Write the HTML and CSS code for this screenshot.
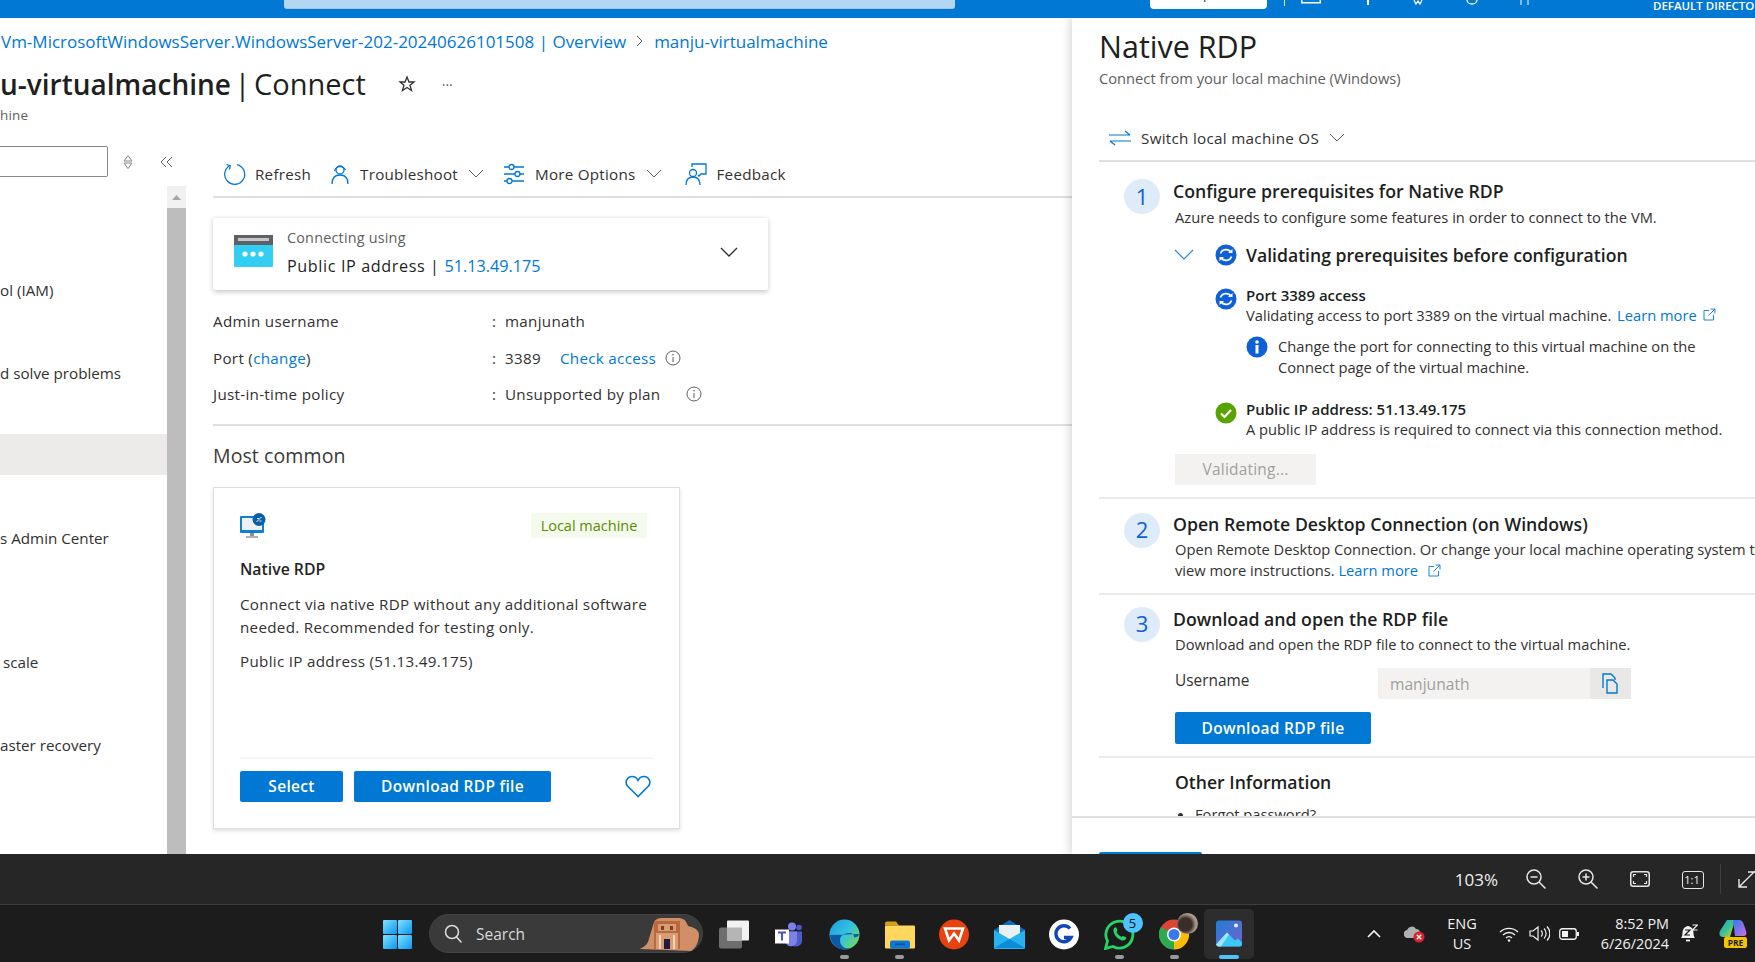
FILE: index.html
```html
<!DOCTYPE html>
<html lang="en">
<head>
<meta charset="utf-8">
<title>Connect</title>
<link rel="stylesheet" href="styles.css">
</head>
<body>
<div class="page">
  <header class="topbar">
    <div class="top-search"><span>Search resources, services, and docs (G+/)</span></div>
    <div class="top-copilot"><span>Copilot</span></div>
    <div class="top-sep"></div>
    <div class="top-ticks">
      <svg width="22" height="6" viewBox="0 0 22 6"><rect x="0" y="2" width="20" height="1.5" fill="#fff"/><rect x="0" y="0" width="1.5" height="3" fill="#fff"/><rect x="18.500" y="0" width="1.5" height="3" fill="#fff"/></svg>
      <svg width="8" height="6" viewBox="0 0 8 6"><path d="M4 0v5" stroke="#fff" stroke-width="2"/></svg>
      <svg width="12" height="6" viewBox="0 0 12 6"><path d="M1 0l2 4 2-3 2 3 2-4" stroke="#fff" stroke-width="1.200" fill="none"/></svg>
      <svg width="12" height="6" viewBox="0 0 12 6"><path d="M1 0a5 4 0 0 0 10 0" stroke="#fff" stroke-width="1.300" fill="none"/></svg>
      <svg width="12" height="6" viewBox="0 0 12 6"><path d="M2 5V0M9 5V0" stroke="#fff" stroke-width="1"/></svg>
    </div>
    <div class="top-dir">DEFAULT DIRECTORY</div>
  </header>

  <div class="workspace">
    <main class="blade">
      <div class="crumbs"><a class="link">Vm-MicrosoftWindowsServer.WindowsServer-202-20240626101508 | Overview</a>
        <svg class="crumb-sep" width="10" height="14" viewBox="0 0 10 14"><path d="M2 2l5 5-5 5" fill="none" stroke="#605e5c" stroke-width="1"/></svg>
        <a class="link">manju-virtualmachine</a></div>
      <div class="title-row">
        <h1 class="title"><b>u-virtualmachine</b> | Connect</h1>
        <svg class="star" width="18" height="18" viewBox="0 0 18 18"><path d="M9 2l2 5h5l-4 3.300 1.500 5.200L9 12.500l-4.500 3L6 10.300 2 7h5z" fill="none" stroke="#323130" stroke-width="1.300"/></svg>
        <span class="dots">···</span>
      </div>
      <div class="subtitle">hine</div>

      <div class="blade-body">
        <aside class="side">
          <div class="side-tools">
            <div class="side-search"></div>
            <svg class="sort" width="10" height="16" viewBox="0 0 10 16"><path d="M5 1.500l4 5.500-4 0-4 0zM5 14.500l4-5.500-4 0-4 0z" fill="none" stroke="#8a8886" stroke-width="1"/></svg>
            <svg class="collapse" width="14" height="12" viewBox="0 0 14 12"><path d="M6 1L1 6l5 5M12 1L7 6l5 5" fill="none" stroke="#605e5c" stroke-width="1"/></svg>
          </div>
          <div class="side-nav">
            <ul class="nav-list">
              <li class="nav-item"></li>
              <li class="nav-item"></li>
              <li class="nav-item">ol (IAM)</li>
              <li class="nav-item"></li>
              <li class="nav-item">d solve problems</li>
              <li class="nav-item"></li>
              <li class="nav-item nav-selected"></li>
              <li class="nav-item"></li>
              <li class="nav-item">s Admin Center</li>
              <li class="nav-item"></li>
              <li class="nav-item"></li>
              <li class="nav-item nav-inset">scale</li>
              <li class="nav-item"></li>
              <li class="nav-item">aster recovery</li>
            </ul>
            <div class="scrollbar">
              <div class="scroll-up"><svg width="11" height="7" viewBox="0 0 11 7"><path d="M5.500 1L10 6H1z" fill="#a6a6a6"/></svg></div>
              <div class="scroll-thumb"></div>
            </div>
          </div>
        </aside>

        <section class="content">
          <div class="toolbar">
            <button class="tool tool-refresh">
              <svg width="24" height="24" viewBox="0 0 24 24"><path d="M8 3.500A10 10 0 1 0 15 2.600" fill="none" stroke="#0078d4" stroke-width="1.300"/><path d="M4.500 2.500L8.200 3.600 7.500 7.500" fill="none" stroke="#0078d4" stroke-width="1.300"/></svg>
              <span>Refresh</span>
            </button>
            <button class="tool">
              <svg width="20" height="24" viewBox="0 0 20 24"><circle cx="10" cy="8" r="4" fill="none" stroke="#0078d4" stroke-width="1.300"/><path d="M4.500 9A6 6.500 0 0 1 15.500 8M2 22c0-6 3-9 8-9s8 3 8 9" fill="none" stroke="#0078d4" stroke-width="1.300"/></svg>
              <span>Troubleshoot</span>
              <svg class="tool-chev" width="16" height="10" viewBox="0 0 16 10"><path d="M1 1l7 7 7-7" fill="none" stroke="#605e5c" stroke-width="1"/></svg>
            </button>
            <button class="tool">
              <svg width="22" height="22" viewBox="0 0 22 22"><path d="M1 4h5M11 4h10M1 11h11M17 11h4M1 18h3M9 18h12" stroke="#0078d4" stroke-width="1.300"/><circle cx="8.500" cy="4" r="2.500" fill="none" stroke="#0078d4" stroke-width="1.300"/><circle cx="14.500" cy="11" r="2.500" fill="none" stroke="#0078d4" stroke-width="1.300"/><circle cx="6.500" cy="18" r="2.500" fill="none" stroke="#0078d4" stroke-width="1.300"/></svg>
              <span>More Options</span>
              <svg class="tool-chev" width="16" height="10" viewBox="0 0 16 10"><path d="M1 1l7 7 7-7" fill="none" stroke="#605e5c" stroke-width="1"/></svg>
            </button>
            <button class="tool tool-feedback">
              <svg width="22" height="24" viewBox="0 0 22 24"><circle cx="8" cy="11" r="3.500" fill="none" stroke="#0078d4" stroke-width="1.300"/><path d="M1 23c0-5 2.500-8 7-8s7 3 7 8M7 5V2h14v10h-5l-2 2-1-1" fill="none" stroke="#0078d4" stroke-width="1.300"/></svg>
              <span>Feedback</span>
            </button>
          </div>

          <div class="conn-card">
            <svg class="conn-icon" width="39" height="32" viewBox="0 0 39 32"><rect width="39" height="32" rx="1" fill="#32cff2"/><rect width="39" height="10" fill="#5e6166"/><rect x="4" y="3" width="31" height="3" fill="#c8c8c8"/><circle cx="11" cy="19" r="2.600" fill="#fff"/><circle cx="19" cy="19" r="2.600" fill="#fff"/><circle cx="27" cy="19" r="2.600" fill="#fff"/></svg>
            <div class="conn-text">
              <div class="conn-label">Connecting using</div>
              <div class="conn-value">Public IP address | <a class="link">51.13.49.175</a></div>
            </div>
            <svg class="conn-chev" width="18" height="11" viewBox="0 0 18 11"><path d="M1 1l8 8 8-8" fill="none" stroke="#323130" stroke-width="1.400"/></svg>
          </div>

          <dl class="props">
            <div class="prop"><dt>Admin username</dt><dd><span class="colon">:</span>manjunath</dd></div>
            <div class="prop"><dt>Port (<a class="link">change</a>)</dt><dd><span class="colon">:</span>3389<a class="link check-link">Check access</a>
              <svg class="info-out" width="16" height="16" viewBox="0 0 16 16"><circle cx="8" cy="8" r="7" fill="none" stroke="#605e5c"/><path d="M8 7v5" stroke="#605e5c"/><circle cx="8" cy="4.800" r=".8" fill="#605e5c"/></svg></dd></div>
            <div class="prop"><dt>Just-in-time policy</dt><dd><span class="colon">:</span>Unsupported by plan
              <svg class="info-far" width="16" height="16" viewBox="0 0 16 16"><circle cx="8" cy="8" r="7" fill="none" stroke="#605e5c"/><path d="M8 7v5" stroke="#605e5c"/><circle cx="8" cy="4.800" r=".8" fill="#605e5c"/></svg></dd></div>
          </dl>
          <div class="rule"></div>
          <h2 class="section">Most common</h2>

          <article class="rdp-card">
            <div class="rdp-head">
              <svg width="27" height="26" viewBox="0 0 27 26"><rect x="0" y="3" width="24" height="17" rx="1" fill="#0f7fd6"/><rect x="2" y="5" width="20" height="12" fill="#eef1f4"/><rect x="10" y="20" width="4" height="3" fill="#8f8f8f"/><rect x="6" y="23" width="12" height="2" fill="#b0b0b0"/><circle cx="19" cy="6.500" r="6.500" fill="#0d5ea8"/><path d="M16.500 9l5-5M17 5.500h2M19.500 8h2" stroke="#fff" stroke-width=".9"/></svg>
              <span class="badge">Local machine</span>
            </div>
            <h3 class="rdp-name">Native RDP</h3>
            <p class="rdp-desc">Connect via native RDP without any additional software<br>needed. Recommended for testing only.</p>
            <p class="rdp-ip">Public IP address (51.13.49.175)</p>
            <div class="rdp-foot">
              <button class="btn btn-select">Select</button>
              <button class="btn btn-dl">Download RDP file</button>
              <svg class="heart" width="26" height="23" viewBox="0 0 26 23"><path d="M13 21.500L2.500 11C-.5 7.500 2 1.500 7 1.500c3 0 5 1.800 6 3.800 1-2 3-3.800 6-3.800 5 0 7.500 6 4.500 9.500z" fill="none" stroke="#0078d4" stroke-width="1.600"/></svg>
            </div>
          </article>
        </section>
      </div>
    </main>

    <aside class="panel">
      <div class="panel-scroll">
        <h2 class="panel-title">Native RDP</h2>
        <div class="panel-sub">Connect from your local machine (Windows)</div>
        <div class="switch">
          <svg width="22" height="16" viewBox="0 0 22 16"><path d="M0 5h21M16 1l5 4M22 11H1M6 15l-5-4" fill="none" stroke="#0078d4" stroke-width="1.200"/></svg>
          <span>Switch local machine OS</span>
          <svg width="16" height="10" viewBox="0 0 16 10"><path d="M1 1l7 7 7-7" fill="none" stroke="#605e5c" stroke-width="1"/></svg>
        </div>

        <section class="step step-one">
          <div class="step-num">1</div>
          <div class="step-body">
            <h3 class="step-title">Configure prerequisites for Native RDP</h3>
            <p class="step-sub">Azure needs to configure some features in order to connect to the VM.</p>
            <div class="val-head">
              <svg class="val-chev" width="20" height="11" viewBox="0 0 20 11"><path d="M1 1l9 9 9-9" fill="none" stroke="#2b88d8" stroke-width="1.200"/></svg>
              <svg width="22" height="22" viewBox="0 0 22 22"><circle cx="11" cy="11" r="10.500" fill="#0f5fd7"/><path d="M5.500 9.500A5.800 5.800 0 0 1 16 8.500M16.500 12.500A5.800 5.800 0 0 1 6 13.500" fill="none" stroke="#fff" stroke-width="1.700"/><path d="M13 9h4.500V5M9 13H4.500v4" fill="#fff"/></svg>
              <span>Validating prerequisites before configuration</span>
            </div>
            <div class="check check-port">
              <svg width="22" height="22" viewBox="0 0 22 22"><circle cx="11" cy="11" r="10.500" fill="#0f5fd7"/><path d="M5.500 9.500A5.800 5.800 0 0 1 16 8.500M16.500 12.500A5.800 5.800 0 0 1 6 13.500" fill="none" stroke="#fff" stroke-width="1.700"/><path d="M13 9h4.500V5M9 13H4.500v4" fill="#fff"/></svg>
              <div>
                <div class="check-title">Port 3389 access</div>
                <div class="check-text">Validating access to port 3389 on the virtual machine. <a class="link learn">Learn more</a>
                  <svg class="ext" width="13" height="13" viewBox="0 0 13 13"><path d="M6 2.500H1v9.500h9.500V7M7.500 1H12v4.500M12 1L5.500 7.500" fill="none" stroke="#0078d4" stroke-width=".9"/></svg></div>
              </div>
            </div>
            <div class="note">
              <svg width="22" height="22" viewBox="0 0 22 22"><circle cx="11" cy="11" r="10.500" fill="#0f5fd7"/><rect x="9.500" y="9" width="3" height="8.500" fill="#fff"/><circle cx="11" cy="6" r="1.800" fill="#fff"/></svg>
              <p>Change the port for connecting to this virtual machine on the<br>Connect page of the virtual machine.</p>
            </div>
            <div class="check check-ip">
              <svg width="22" height="22" viewBox="0 0 22 22"><circle cx="11" cy="11" r="10.500" fill="#57a300"/><path d="M6 11.500l3.500 3.500L16 8" fill="none" stroke="#fff" stroke-width="2.200"/></svg>
              <div>
                <div class="check-title">Public IP address: 51.13.49.175</div>
                <div class="check-text">A public IP address is required to connect via this connection method.</div>
              </div>
            </div>
            <button class="btn-disabled">Validating...</button>
          </div>
        </section>

        <section class="step step-two">
          <div class="step-num">2</div>
          <div class="step-body">
            <h3 class="step-title">Open Remote Desktop Connection (on Windows)</h3>
            <p class="step-lines">Open Remote Desktop Connection. Or change your local machine operating system to<br>view more instructions. <a class="link">Learn more</a>
              <svg class="ext" width="13" height="13" viewBox="0 0 13 13"><path d="M6 2.500H1v9.500h9.500V7M7.500 1H12v4.500M12 1L5.500 7.500" fill="none" stroke="#0078d4" stroke-width=".9"/></svg></p>
          </div>
        </section>

        <section class="step step-three">
          <div class="step-num">3</div>
          <div class="step-body">
            <h3 class="step-title">Download and open the RDP file</h3>
            <p class="step-sub">Download and open the RDP file to connect to the virtual machine.</p>
            <div class="field">
              <label class="field-label">Username</label>
              <div class="field-box">
                <span class="field-value">manjunath</span>
                <span class="field-copy"><svg width="19" height="21" viewBox="0 0 19 21"><path d="M2 15V1h8l4 4v2M6 20V7h6l4 4v9z" fill="none" stroke="#0078d4" stroke-width="1.400"/></svg></span>
              </div>
            </div>
            <button class="btn btn-panel">Download RDP file</button>
          </div>
        </section>

        <section class="other">
          <h3 class="other-title">Other Information</h3>
          <ul class="other-list"><li>Forgot password?</li></ul>
        </section>
      </div>
      <footer class="panel-foot"><button class="foot-btn">Close</button></footer>
    </aside>
  </div>

  <div class="viewer">
    <span class="zoom-pct">103%</span>
    <span class="v-btn"><svg width="22" height="22" viewBox="0 0 22 22"><circle cx="9" cy="9" r="7" fill="none" stroke="#e6e6e6" stroke-width="1.500"/><path d="M5.500 9h7M14 14l6.500 6.500" stroke="#e6e6e6" stroke-width="1.500"/></svg></span>
    <span class="v-btn"><svg width="22" height="22" viewBox="0 0 22 22"><circle cx="9" cy="9" r="7" fill="none" stroke="#e6e6e6" stroke-width="1.500"/><path d="M5.500 9h7M9 5.500v7M14 14l6.500 6.500" stroke="#e6e6e6" stroke-width="1.500"/></svg></span>
    <span class="v-btn"><svg width="20" height="16" viewBox="0 0 20 16"><rect x=".75" y=".75" width="18.500" height="14.500" rx="2.500" fill="none" stroke="#e6e6e6" stroke-width="1.500"/><path d="M3.500 6V3.500H6M14 3.500h2.500V6M3.500 10v2.500H6M14 12.500h2.500V10" fill="none" stroke="#e6e6e6" stroke-width="1.200"/></svg></span>
    <span class="v-btn v-ratio">1:1</span>
    <span class="v-sep"></span>
    <svg class="v-expand" width="17" height="17" viewBox="0 0 17 17"><path d="M1 16L17 0M1 8v8h8M10 1h7" fill="none" stroke="#e6e6e6" stroke-width="1.400"/></svg>
  </div>

  <footer class="taskbar">
    <svg class="win" width="29" height="29" viewBox="0 0 29 29"><defs><linearGradient id="wg" x1="0" y1="0" x2="1" y2="1"><stop offset="0" stop-color="#7fe3ff"/><stop offset="1" stop-color="#0b96f0"/></linearGradient></defs><rect width="14" height="14" rx="1" fill="url(#wg)"/><rect x="15" width="14" height="14" rx="1" fill="url(#wg)"/><rect y="15" width="14" height="14" rx="1" fill="url(#wg)"/><rect x="15" y="15" width="14" height="14" rx="1" fill="url(#wg)"/></svg>
    <div class="task-search">
      <svg width="19" height="20" viewBox="0 0 19 20"><circle cx="8" cy="8" r="6.500" fill="none" stroke="#dcdcdc" stroke-width="1.500"/><path d="M12.500 13l5 5.500" stroke="#dcdcdc" stroke-width="1.500"/></svg>
      <span>Search</span>
      <svg class="petra" width="60" height="34" viewBox="0 0 60 34"><path d="M0 32c3-2 6-3 8-7l6-20c2-3 4-4 8-4h16c5 0 8 2 10 8 5 1 10 3 11 8 0 8-3 14-8 17z" fill="#d18f68"/><path d="M14 4h26v28H14z" fill="#b9683f"/><path d="M18 7h18v7H18zM16 16h22v16H16z" fill="#d99b74"/><rect x="21" y="9" width="3" height="4" fill="#7c3f25"/><rect x="30" y="9" width="3" height="4" fill="#7c3f25"/><rect x="24" y="22" width="6" height="10" fill="#1e1e3c"/><rect x="19" y="18" width="2" height="14" fill="#f3d5bd"/><rect x="33" y="18" width="2" height="14" fill="#f3d5bd"/></svg>
    </div>
    <div class="tile"><svg width="31" height="30" viewBox="0 0 31 30"><rect y="8" width="23" height="21" rx="2" fill="#6e6e6e"/><rect x="8" y="1" width="22" height="20" rx="1" fill="#f2f2f2"/><rect x="8" y="8" width="15" height="13" fill="#b5b5b5"/></svg><i class="pill pill-off"></i></div>
    <div class="tile"><svg width="28" height="26" viewBox="0 0 28 26"><circle cx="17" cy="5" r="4" fill="#7b83eb"/><circle cx="24" cy="6" r="2.800" fill="#5059c9"/><path d="M13 10h14v8a6 6 0 0 1-6 7h-1a7 7 0 0 1-7-7z" fill="#5059c9"/><path d="M11 10h11v9a6 6 0 0 1-11 3z" fill="#7b83eb"/><rect y="8" width="14" height="14" fill="#fff"/><path d="M3 11h8M7 11v8" stroke="#4b53bc" stroke-width="2"/></svg><i class="pill pill-off"></i></div>
    <div class="tile"><svg width="31" height="31" viewBox="0 0 31 31"><defs><linearGradient id="eg" x1="0" y1="0" x2="1" y2=".8"><stop offset="0" stop-color="#1b9de2"/><stop offset=".55" stop-color="#35c1e1"/><stop offset="1" stop-color="#6fdc5a"/></linearGradient></defs><circle cx="15.500" cy="15.500" r="15" fill="url(#eg)"/><path d="M1 16a15 15 0 0 0 22 13c-7 2-12-2-12-8 0-4 4-7 9-7 4 0 5 2 5 4 0 1 5 0 5-3" fill="#0c59a4"/></svg><i class="pill"></i></div>
    <div class="tile"><svg width="31" height="28" viewBox="0 0 31 28"><path d="M1 3a2 2 0 0 1 2-2h9l3 4H1z" fill="#d9a013"/><rect x="1" y="5" width="30" height="23" rx="1" fill="#ffd75e"/><rect x="6" y="20" width="20" height="8" rx="2" fill="#0f78d4"/><rect x="11" y="23" width="10" height="1.500" fill="#0a4f8f"/></svg><i class="pill"></i></div>
    <div class="tile"><svg width="30" height="30" viewBox="0 0 30 30"><circle cx="15" cy="15" r="15" fill="#e8420f"/><path d="M6 9h18l-4 12-5-7-5 7z" fill="none" stroke="#fff" stroke-width="2.600"/></svg><i class="pill pill-none"></i></div>
    <div class="tile"><svg width="31" height="29" viewBox="0 0 31 29"><path d="M0 10L15.500 0 31 10v18H0z" fill="#0f6cbd"/><path d="M5 5h21v9l-10.500 6L5 14z" fill="#e8f0f8"/><path d="M0 10l15.500 9L31 10v18a1 1 0 0 1-1 1H1a1 1 0 0 1-1-1z" fill="#27b3ee"/><path d="M0 28l15.500-9L31 28" fill="#0f8ad8"/></svg><i class="pill pill-none"></i></div>
    <div class="tile"><svg width="30" height="30" viewBox="0 0 30 30"><circle cx="15" cy="15" r="15" fill="#fff"/><path d="M21 9a8 8 0 1 0 1 9h-7" fill="none" stroke="#1546b8" stroke-width="3.400"/></svg><i class="pill pill-none"></i></div>
    <div class="tile tile-badge"><svg width="31" height="31" viewBox="0 0 31 31"><path d="M1.500 29.500l2-7.500a13.500 13.500 0 1 1 5.500 5.500z" fill="none" stroke="#25d366" stroke-width="2.800"/><path d="M10 9c1-1 2-1 2.500 0l1 2.500-1 1.500c1 2 3 4 5 5l1.500-1 2.500 1c1 .5 1 1.500 0 2.500-2 2-5 1-8-1.500s-5-7-3.500-10z" fill="#25d366"/></svg><span class="count">5</span><i class="pill"></i></div>
    <div class="tile tile-badge"><svg width="30" height="30" viewBox="0 0 30 30"><circle cx="15" cy="15" r="15" fill="#db4437"/><path d="M15 15L28 7.500A15 15 0 0 1 15 30z" fill="#fbbc04"/><path d="M15 15v15A15 15 0 0 1 2 7.500z" fill="#2da94f"/><circle cx="15" cy="15" r="7" fill="#fff"/><circle cx="15" cy="15" r="5.500" fill="#3b78e7"/></svg><span class="avatar"></span><i class="pill"></i></div>
    <div class="tile tile-active"><svg width="26" height="28" viewBox="0 0 26 28"><defs><linearGradient id="pg" x1="0" y1="0" x2="1" y2="1"><stop offset="0" stop-color="#1f7fd6"/><stop offset="1" stop-color="#7560d0"/></linearGradient></defs><rect width="26" height="26" rx="3" fill="url(#pg)"/><circle cx="20" cy="5" r="2" fill="#e8f0f8"/><path d="M0 24l11-12 8 8 3-2 4 4v2a2 2 0 0 1-2 2H3a3 3 0 0 1-3-2z" fill="#3cc8f4"/><path d="M0 24l11-12 2 2-8 12H2z" fill="#9ee6fb"/></svg><i class="pill pill-blue"></i></div>

    <div class="tray">
      <span class="tray-item tray-chev"><svg width="16" height="9" viewBox="0 0 16 9"><path d="M2 8l6-6 6 6" fill="none" stroke="#f2f2f2" stroke-width="1.700"/></svg></span>
      <span class="tray-item tray-cloud"><svg width="21" height="18" viewBox="0 0 21 18"><path d="M1 12a4 4 0 0 1 2-7 5 5 0 0 1 9-1c3 0 4 2 4 4v5H4a3 3 0 0 1-3-1z" fill="#b0b0b0"/><circle cx="15" cy="12" r="5.500" fill="#d8232f"/><path d="M12.800 9.800l4.400 4.400M17.200 9.800l-4.400 4.400" stroke="#fff" stroke-width="1.300"/></svg></span>
      <span class="tray-lang">ENG<br>US</span>
      <span class="tray-item tray-wifi"><svg width="20" height="16" viewBox="0 0 20 16"><path d="M1 6a13 13 0 0 1 18 0M4 9a8.500 8.500 0 0 1 12 0M7 12a4 4 0 0 1 6 0" fill="none" stroke="#f2f2f2" stroke-width="1.300"/><circle cx="10" cy="14.500" r="1.200" fill="#f2f2f2"/></svg></span>
      <span class="tray-item"><svg width="21" height="17" viewBox="0 0 21 17"><path d="M1 6h3l5-4v13l-5-4H1z" fill="none" stroke="#f2f2f2" stroke-width="1.200"/><path d="M12 5.500a4 4 0 0 1 0 6M15 3.500a7 7 0 0 1 0 10M18 1.500a10 10 0 0 1 0 14" fill="none" stroke="#f2f2f2" stroke-width="1.200"/></svg></span>
      <span class="tray-item"><svg width="20" height="12" viewBox="0 0 20 12"><rect x=".75" y=".75" width="16.500" height="10.500" rx="2.500" fill="none" stroke="#f2f2f2" stroke-width="1.300"/><rect x="3" y="3" width="6" height="6" fill="#f2f2f2"/><rect x="18" y="4" width="2" height="4" fill="#f2f2f2"/></svg></span>
      <span class="tray-clock">8:52 PM<br>6/26/2024</span>
      <span class="tray-item tray-bell"><svg width="18" height="19" viewBox="0 0 18 19"><path d="M1 14c2-2 1-5 2-8s4-4 5-4 4 1 5 4 0 6 2 8z" fill="#f2f2f2"/><path d="M6 16.500h4" stroke="#f2f2f2" stroke-width="1.800"/><path d="M5 6h5l-5 5h5" fill="none" stroke="#1c1c1c" stroke-width="1.200"/><path d="M12.500 1h5l-5 5h5" fill="none" stroke="#f2f2f2" stroke-width="1.200"/></svg></span>
      <span class="tray-copilot"><svg width="28" height="24" viewBox="0 0 28 24"><defs><linearGradient id="cg" x1="0" y1="0" x2="1" y2="1"><stop offset="0" stop-color="#2f9bf0"/><stop offset=".5" stop-color="#36c58e"/><stop offset="1" stop-color="#f5c32c"/></linearGradient><linearGradient id="cg2" x1="0" y1="0" x2="1" y2="1"><stop offset="0" stop-color="#2b7cf0"/><stop offset="1" stop-color="#cf6de0"/></linearGradient></defs><path d="M8 1h8l-5 17H4c-4 0-4-4-3-6z" fill="url(#cg)"/><path d="M14 1h6c3 0 4 2 5 5l2 6c1 3 0 5-3 5h-8z" fill="url(#cg2)"/></svg><span class="pre">PRE</span></span>
    </div>
  </footer>
</div>
</body>
</html>
```
FILE: styles.css
```css
* { box-sizing: border-box; }
html, body { margin: 0; padding: 0; background: #fff; }
body { font-family: "Open Sans", "Noto Sans", "Liberation Sans", sans-serif; color: #323130; font-size: 14px; }
h1, h2, h3, p, ul, dl, dd { margin: 0; padding: 0; font-weight: inherit; }
ul { list-style: none; }
button { font-family: inherit; border: 0; background: none; padding: 0; }
.link { color: #0078d4; }
svg { display: block; flex-shrink: 0; }

.page { width: 1755px; height: 962px; overflow: hidden; display: flex; flex-direction: column; }

/* top bar */
.topbar { height: 18px; flex: none; background: #0078d4; display: flex; align-items: flex-start; overflow: hidden; }
.top-search { flex: none; margin-left: 284px; width: 671px; height: 9px; background: #b3d6f2; border-bottom: 1px solid #9cc9ee; border-radius: 0 0 3px 3px; display: flex; justify-content: center; align-items: flex-end; padding-bottom: 8px; overflow: hidden; font-size: 13px; line-height: 14px; color: #1a5f9e; white-space: nowrap; }
.top-copilot { flex: none; margin-left: 195px; width: 117px; height: 9px; background: #fff; border-radius: 0 0 4px 4px; display: flex; justify-content: center; align-items: flex-end; padding-bottom: 8px; overflow: hidden; font-size: 13px; line-height: 14px; color: #0b3a63; }
.top-sep { flex: none; margin-left: 17px; width: 1px; height: 6px; background: #d7e8f6; }
.top-ticks { flex: none; margin-left: 16px; display: flex; gap: 41px; }
.top-dir { flex: none; margin-left: 122px; white-space: nowrap; font-size: 11.500px; font-weight: 600; line-height: 11px; color: #fff; }

.workspace { height: 836px; flex: none; display: flex; overflow: hidden; }

/* left blade */
.blade { width: 1072px; flex: none; display: flex; flex-direction: column; overflow: hidden; font-size: 15.200px; letter-spacing: .3px; }
.crumbs { height: 46px; margin-bottom: 2px; flex: none; display: flex; align-items: center; gap: 7px; padding-left: 1px; font-size: 17px; letter-spacing: 0; white-space: nowrap; }
.crumb-sep { margin: 0 2px; }
.title-row { height: 36px; flex: none; display: flex; align-items: center; letter-spacing: 0; }
.title { font-size: 29px; line-height: 36px; color: #201f1e; white-space: nowrap; word-spacing: -4px; }
.title b { font-weight: 600; font-size: 28px; word-spacing: 0; }
.star { margin-left: 32px; }
.dots { margin-left: 26px; font-size: 14px; color: #605e5c; }
.subtitle { margin-top: 3px; height: 20px; line-height: 20px; font-size: 13.500px; color: #605e5c; letter-spacing: .2px; }
.blade-body { flex: 1; min-height: 0; display: flex; }

.side { width: 186px; flex: none; display: flex; flex-direction: column; padding-top: 21px; }
.side-tools { height: 31px; flex: none; margin-bottom: 9px; display: flex; align-items: center; }
.side-search { width: 108px; height: 31px; background: #fff; border: 1px solid #8a8886; border-left: 0; border-radius: 0 2px 2px 0; }
.sort { margin-left: 15px; }
.collapse { margin-left: 27px; }
.side-nav { flex: 1; min-height: 0; display: flex; }
.nav-list { width: 167px; flex: none; padding-top: .5px; overflow: hidden; letter-spacing: 0; }
.nav-item { height: 41.400px; display: flex; align-items: center; white-space: nowrap; color: #323130; }
.nav-selected { background: #edebe9; margin: -.9px 0 .9px; }
.nav-inset { padding-left: 3px; }
.scrollbar { width: 19px; flex: none; display: flex; flex-direction: column; background: #f1f1f1; }
.scroll-up { height: 22px; flex: none; display: flex; align-items: center; justify-content: center; }
.scroll-thumb { flex: 1; background: #bdbdbd; }

.content { width: 886px; flex: none; padding: 26px 0 0 27px; }
.toolbar { height: 47px; display: flex; align-items: center; gap: 19px; border-bottom: 2px solid #e1dfdd; padding-left: 9px; }
.tool { display: flex; align-items: center; gap: 10px; font-size: 15.200px; letter-spacing: .25px; color: #323130; }
.tool-refresh { gap: 9px; }
.tool-feedback { margin-left: 4px; }

.conn-card { width: 555px; height: 72px; margin-top: 20px; display: flex; align-items: center; padding: 0 30px 0 21px; border-radius: 2px; box-shadow: 0 1.500px 5px rgba(0,0,0,.22); }
.conn-icon { align-self: flex-start; margin-top: 17px; }
.conn-text { margin-left: 14px; flex: 1; }
.conn-label { font-size: 14.400px; letter-spacing: .2px; line-height: 20px; color: #605e5c; margin-top: -4px; }
.conn-value { font-size: 16.200px; letter-spacing: .6px; line-height: 22px; margin-top: 7px; color: #201f1e; font-weight: 500; }
.conn-value .link { letter-spacing: 0; }
.conn-chev { margin-bottom: 4px; }

.props { margin-top: 13px; }
.prop { height: 36.500px; display: flex; align-items: center; }
.prop dt { width: 279px; }
.prop dd { display: flex; align-items: center; white-space: nowrap; }
.colon { width: 13px; }
.check-link { margin-left: 19px; }
.info-out { margin-left: 9px; }
.info-far { margin-left: 26px; }
.rule { margin-top: 11px; height: 2px; background: #e1dfdd; width: 859px; }
.section { margin-top: 15px; font-size: 19.500px; letter-spacing: .1px; line-height: 30px; color: #3b3a39; font-weight: 400; }

.rdp-card { margin-top: 16px; width: 467px; height: 342px; display: flex; flex-direction: column; padding: 25px 26px 26px; border: 1px solid #e1dfdd; box-shadow: 0 1.500px 4px rgba(0,0,0,.13); }
.rdp-head { height: 26px; flex: none; display: flex; justify-content: space-between; padding-right: 6px; }
.badge { width: 116px; height: 25px; display: flex; align-items: center; justify-content: center; background: #f5fbec; color: #5c8a00; font-size: 14.500px; letter-spacing: 0; }
.rdp-name { margin-top: 20px; font-size: 15.800px; letter-spacing: 0; line-height: 20px; font-weight: 600; color: #252423; }
.rdp-desc { margin-top: 14.500px; line-height: 23px; white-space: nowrap; }
.rdp-ip { margin-top: 11px; line-height: 23px; }
.rdp-foot { margin-top: auto; display: flex; align-items: center; border-top: 2px solid #f6f5f4; padding-top: 12px; }
.btn { height: 31px; background: #0078d4; color: #fff; font-weight: 600; font-size: 15.500px; letter-spacing: .3px; border-radius: 2px; }
.btn-select { width: 103px; }
.btn-dl { width: 197px; margin-left: 11px; }
.heart { margin-left: auto; margin-right: 2px; }

/* right panel */
.panel { flex: 1; min-width: 0; display: flex; flex-direction: column; box-shadow: -3px 0 8px rgba(0,0,0,.14); position: relative; background: #fff; overflow: hidden; font-size: 14.700px; }
.panel-scroll { height: 798px; flex: none; padding: 8px 0 0 27px; overflow: hidden; white-space: nowrap; }
.panel-title { font-size: 30.500px; line-height: 40px; color: #201f1e; font-weight: 400; }
.panel-sub { margin-top: 2px; line-height: 20px; color: #605e5c; }
.switch { margin-top: 28px; height: 46px; display: flex; align-items: center; padding-left: 10px; gap: 10px; border-bottom: 2px solid #e1dfdd; font-size: 15.200px; letter-spacing: .3px; }
.step { display: flex; padding-left: 25px; border-bottom: 2px solid #edebe9; }
.step-one { padding-top: 17px; padding-bottom: 12px; }
.step-two { padding-top: 14px; padding-bottom: 12px; }
.step-three { padding-top: 12px; padding-bottom: 12px; }
.step-num { width: 36px; height: 35px; flex: none; margin-right: 13px; padding-bottom: 2px; border-radius: 50%; background: #deecf9; color: #0f5fd7; font-size: 22px; display: flex; align-items: center; justify-content: center; }
.step-title { margin: -1px 0 1px; font-size: 17.700px; line-height: 26px; font-weight: 600; color: #201f1e; }
.step-two .step-title { margin: -2px 0 2px; }
.step-sub { margin: 3px 0 0 2px; line-height: 20px; }
.step-three .step-sub { margin-top: 2px; }
.step-lines { margin: 0 0 0 2px; line-height: 21px; }
.val-head { margin-top: 13.500px; height: 28px; display: flex; align-items: center; font-size: 17.600px; font-weight: 600; color: #201f1e; }
.val-chev { margin: 0 21px 0 1px; }
.val-head span { margin-left: 9px; }
.check { display: flex; }
.check-port { margin: 16px 0 0 42px; }
.check-ip { margin: 20.500px 0 0 42px; }
.check > svg { margin: 3px 9px 0 0; }
.check-title { font-size: 15px; line-height: 20px; font-weight: 600; color: #201f1e; }
.check-text { line-height: 20px; display: flex; align-items: center; white-space: pre-wrap; }
.learn { margin-left: 2px; }
.ext { margin-left: 6px; display: inline-block; vertical-align: -1px; }
.note { margin: 11.500px 0 0 73px; display: flex; }
.note svg { margin: 0 10px 0 0; }
.note p { line-height: 21px; }
.btn-disabled { display: block; margin: 15px 0 0 2px; width: 141px; height: 31px; background: #f3f2f1; color: #a19f9d; font-size: 15.500px; letter-spacing: .2px; font-weight: 500; }
.field { margin: 14px 0 0 2px; display: flex; height: 31px; }
.field-label { width: 203px; line-height: 26px; font-size: 15.400px; }
.field-box { width: 253px; display: flex; background: #f3f2f1; border-radius: 2px; }
.field-value { flex: 1; padding-left: 12px; line-height: 33px; color: #a19f9d; font-size: 15.600px; }
.field-copy { width: 41px; background: #e9e8e6; display: flex; align-items: center; justify-content: center; }
.btn-panel { display: block; margin: 13px 0 0 2px; width: 196px; height: 32px; }
.other { padding: 10px 0 0 76px; }
.other-title { font-size: 17.600px; line-height: 28px; font-weight: 600; color: #201f1e; }
.other-list { margin-top: 8px; line-height: 20px; padding-left: 20px; list-style: disc; }
.panel-foot { flex: 1; min-height: 0; border-top: 2px solid #e1dfdd; padding: 34px 0 0 27px; overflow: hidden; }
.foot-btn { display: block; width: 103px; height: 31px; background: #0078d4; color: #fff; border-radius: 2px; font-size: 14px; }

/* viewer bar */
.viewer { height: 51px; flex: none; background: #262626; border-bottom: 1px solid #3d3d3d; display: flex; align-items: center; justify-content: flex-end; color: #f0f0f0; overflow: hidden; }
.zoom-pct { font-size: 17px; margin-right: 12px; }
.v-btn { width: 52px; display: flex; align-items: center; justify-content: center; }
.v-ratio { position: relative; height: 16px; font-size: 11px; }
.v-ratio::before { content: ""; position: absolute; left: 16px; top: 0; width: 20px; height: 16px; border: 1.500px solid #e6e6e6; border-radius: 3px; }
.v-sep { width: 1px; height: 30px; background: #3d3d3d; margin-left: 2px; }
.v-expand { margin-left: 17px; }

/* taskbar */
.taskbar { flex: 1; min-height: 0; background: #1c1c1c; display: flex; align-items: flex-start; padding-left: 383px; color: #f2f2f2; overflow: hidden; }
.win { margin-top: 15px; }
.task-search { margin: 9px 3.500px 0 17px; width: 274px; height: 39px; flex: none; border-radius: 20px; background: #3a3a3a; border: 1px solid #444; display: flex; align-items: center; padding-left: 14px; font-size: 15.500px; color: #d8d8d8; }
.task-search span { margin-left: 13px; }
.petra { margin-left: auto; margin-right: 2px; }
.tile { width: 55px; height: 58px; flex: none; padding-top: 14px; display: flex; flex-direction: column; align-items: center; position: relative; }
.tile > svg { height: 31px; }
.pill { display: block; width: 9px; height: 3.500px; border-radius: 2px; background: #9a9a9a; margin-top: 5px; }
.pill-off, .pill-none { visibility: hidden; }
.pill-blue { width: 20px; background: #4cc2ff; }
.tile-active::before { content: ""; position: absolute; left: 2px; top: 4px; width: 50px; height: 50px; background: #2d2d2d; border-radius: 5px; }
.tile-active > * { position: relative; }
.count { position: absolute; left: 31px; top: 8px; width: 20px; height: 20px; border-radius: 50%; background: #4cc2ff; color: #111; font-size: 13px; line-height: 20px; text-align: center; }
.avatar { position: absolute; left: 30px; top: 8px; width: 21px; height: 21px; border-radius: 50%; background: radial-gradient(circle at 40% 55%, #3a2e2a 0 38%, #a99a8f 62%); }
.tray { margin-left: auto; display: flex; align-items: center; height: 57px; padding-right: 3px; }
.tray-item { width: 30px; display: flex; justify-content: center; }
.tray-cloud { margin-left: 10px; }
.tray-lang { width: 40px; margin-left: 13px; margin-right: 12px; text-align: center; font-size: 14.500px; line-height: 20px; }
.tray-clock { width: 85px; text-align: right; font-size: 14.400px; line-height: 20px; }
.tray-bell { width: 40px; }
.tray-copilot { width: 38px; margin-left: 5px; position: relative; height: 30px; display: flex; justify-content: center; }
.pre { position: absolute; left: 10px; top: 18px; width: 23px; height: 11px; background: #f5c400; border-radius: 2px; color: #1c1c1c; font-size: 8.500px; line-height: 11px; font-weight: 700; text-align: center; }
```
